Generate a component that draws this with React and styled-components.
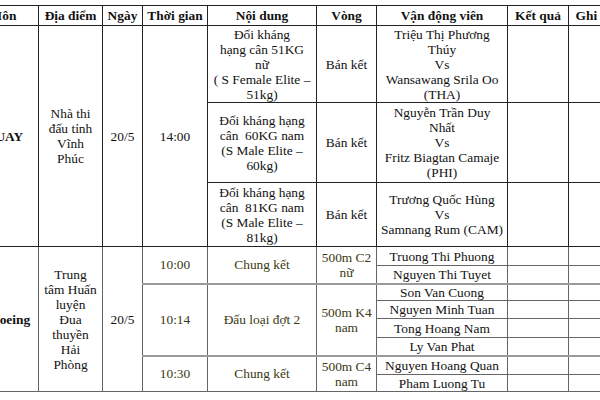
import React from "react";
import styled, { createGlobalStyle } from "styled-components";

const Global = createGlobalStyle`
  html, body { margin: 0; padding: 0; background: #fff; }
  body { font-family: "Liberation Serif", "Times New Roman", serif; }
`;

const Viewport = styled.div`
  width: 600px;
  height: 400px;
  overflow: hidden;
  padding-top: 5px;
  box-sizing: border-box;
  background: #fff;
`;

const Table = styled.table`
  margin-left: -33px;
  border-collapse: collapse;
  table-layout: fixed;
  width: 661px;
  font-family: "Liberation Serif", "Times New Roman", serif;
  font-size: 13.4px;
  line-height: 15px;
  color: #111;
`;

const Th = styled.th`
  border: 1px solid #222;
  font-family: "Liberation Serif", "Times New Roman", serif;
  font-size: 13.4px;
  font-weight: 700;
  text-align: center;
  vertical-align: middle;
  padding: 0 2px;
  white-space: nowrap;
`;

const Td = styled.td`
  border: 1px solid ${(p) => (p.$grey ? "#666" : "#222")};
  ${(p) => (p.$thickTop ? "border-top: 2px solid #9a9a9a;" : "")}
  font-family: "Liberation Serif", "Times New Roman", serif;
  font-size: 13.4px;
  line-height: 15px;
  text-align: center;
  vertical-align: middle;
  padding: 0 2px;
  font-weight: ${(p) => (p.$bold ? 700 : 400)};
  color: ${(p) => (p.$olive ? "#3b3812" : "#111")};
  white-space: nowrap;
`;

const Row = styled.tr`
  height: ${(p) => p.$h}px;
`;

const cols = [71, 64, 40, 65, 109, 60, 131, 61, 60];

const canoe = [
  { time: "10:00", content: "Chung kết", round: ["500m C2", "nữ"], names: ["Truong Thi Phuong", "Nguyen Thi Tuyet"], h: [19, 18] },
  { time: "10:14", content: "Đấu loại đợt 2", round: ["500m K4", "nam"], names: ["Son Van Cuong", "Nguyen Minh Tuan", "Tong Hoang Nam", "Ly Van Phat"], h: [17, 18, 19, 18] },
  { time: "10:30", content: "Chung kết", round: ["500m C4", "nam"], names: ["Nguyen Hoang Quan", "Pham Luong Tu"], h: [19, 17] },
];

const Lines = ({ lines }) =>
  lines.map((l, i) => (
    <React.Fragment key={i}>
      {i > 0 && <br />}
      {l}
    </React.Fragment>
  ));

export default function App() {
  const muay = [
    {
      h: 77,
      content: ["Đối kháng", "hạng cân 51KG", "nữ", "( S Female Elite –", "51kg)"],
      names: ["Triệu Thị Phương", "Thúy", "Vs", "Wansawang Srila Oo", "(THA)"],
    },
    {
      h: 80,
      content: ["Đối kháng hạng", "cân\u00a0 60KG nam", "(S Male Elite –", "60kg)"],
      names: ["Nguyễn Trần Duy", "Nhất", "Vs", "Fritz Biagtan Camaje", "(PHI)"],
    },
    {
      h: 64,
      content: ["Đối kháng hạng", "cân\u00a0 81KG nam", "(S Male Elite –", "81kg)"],
      names: ["Trương Quốc Hùng", "Vs", "Samnang Rum (CAM)"],
    },
  ];

  const canoeRows = [];
  let first = true;
  canoe.forEach((g, gi) => {
    g.names.forEach((n, ni) => {
      const top = ni === 0 && gi > 0;
      canoeRows.push(
        <Row $h={g.h[ni]} key={`${gi}-${ni}`}>
          {first && (
            <>
              <Td rowSpan={8} $bold $grey>Canoeing</Td>
              <Td rowSpan={8} $grey>
                <Lines lines={["Trung", "tâm Huấn", "luyện", "Đua", "thuyền", "Hải", "Phòng"]} />
              </Td>
              <Td rowSpan={8} $grey>20/5</Td>
            </>
          )}
          {ni === 0 && (
            <>
              <Td rowSpan={g.names.length} $olive $grey $thickTop={top}>{g.time}</Td>
              <Td rowSpan={g.names.length} $olive $grey $thickTop={top}>{g.content}</Td>
              <Td rowSpan={g.names.length} $olive $grey $thickTop={top}>
                <Lines lines={g.round} />
              </Td>
            </>
          )}
          <Td $grey $thickTop={top}>{n}</Td>
          <Td $grey $thickTop={top} />
          <Td $grey $thickTop={top} />
        </Row>
      );
      first = false;
    });
  });

  return (
    <Viewport>
      <Global />
      <Table>
        <colgroup>
          {cols.map((w, i) => (
            <col key={i} style={{ width: w }} />
          ))}
        </colgroup>
        <thead>
          <Row $h={20}>
            <Th>Môn</Th>
            <Th>Địa điểm</Th>
            <Th>Ngày</Th>
            <Th>Thời gian</Th>
            <Th>Nội dung</Th>
            <Th>Vòng</Th>
            <Th>Vận động viên</Th>
            <Th>Kết quả</Th>
            <Th>Ghi chú</Th>
          </Row>
        </thead>
        <tbody>
          {muay.map((r, i) => (
            <Row $h={r.h} key={i}>
              {i === 0 && (
                <>
                  <Td rowSpan={3} $bold>MUAY</Td>
                  <Td rowSpan={3}>
                    <Lines lines={["Nhà thi", "đấu tỉnh", "Vĩnh", "Phúc"]} />
                  </Td>
                  <Td rowSpan={3}>20/5</Td>
                  <Td rowSpan={3}>14:00</Td>
                </>
              )}
              <Td>
                <Lines lines={r.content} />
              </Td>
              <Td>Bán kết</Td>
              <Td>
                <Lines lines={r.names} />
              </Td>
              <Td />
              <Td />
            </Row>
          ))}
          {canoeRows}
        </tbody>
      </Table>
    </Viewport>
  );
}
